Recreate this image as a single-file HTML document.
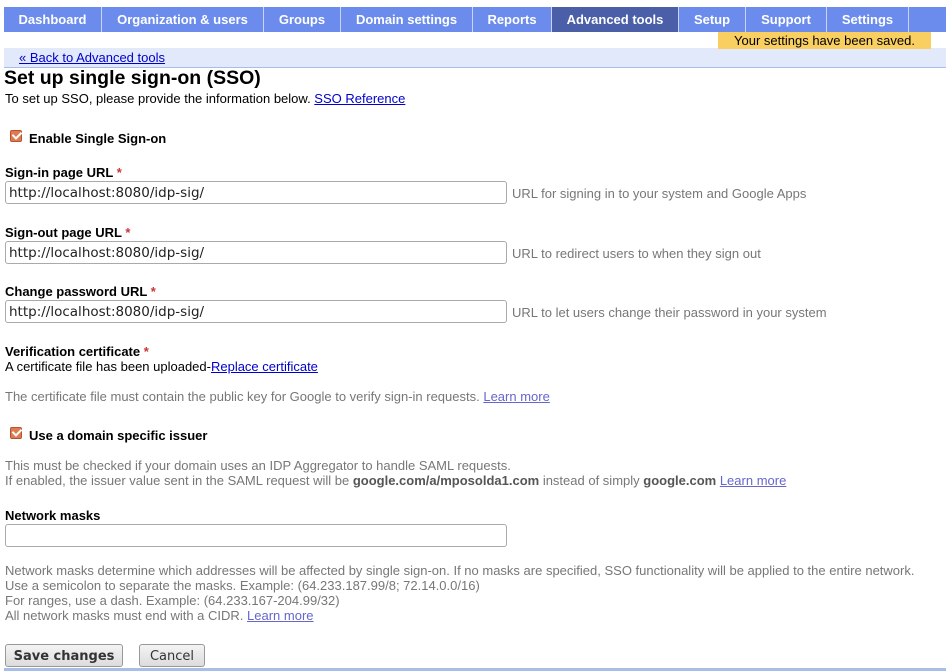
<!DOCTYPE html>
<html><head><meta charset="utf-8"><style>
body{margin:0;width:946px;height:671px;overflow:hidden;background:#fff;font-family:"Liberation Sans",Arial,sans-serif;font-size:13px;color:#000;position:relative}
.a{position:absolute;white-space:nowrap}
.tab{position:absolute;top:7px;height:25px;background:#6b8ced;color:#fff;font-weight:bold;font-size:13px;line-height:25px;text-align:center;border-right:1px solid #c9d5f7;box-sizing:border-box}
a{color:#00c;text-decoration:underline}
.lbl{font-weight:bold}
.req{color:#c33}
.inp{position:absolute;left:5px;width:502px;height:23px;border:1px solid #aaa;border-radius:3px;box-sizing:border-box;font-family:"DejaVu Sans",sans-serif;font-size:13.5px;line-height:23px;padding-left:3px;color:#222}
.hint{color:#777}
.cb{position:absolute;width:12px;height:12px;background:#e07a50;border:1px solid #b5532d;border-radius:2px;box-sizing:border-box}
.cb:after{content:"";position:absolute;left:3px;top:-1px;width:4px;height:7px;border:solid #fff;border-width:0 2px 2px 0;transform:rotate(45deg)}
.btn{position:absolute;top:644px;height:23px;border:1px solid #999;border-radius:3px;background:linear-gradient(#f4f4f4,#dcdcdc);box-sizing:border-box;font-family:"DejaVu Sans",sans-serif;font-size:13px;line-height:23px;text-align:center;color:#333}
</style></head><body>
<div class="tab" style="left:4px;width:98px">Dashboard</div>
<div class="tab" style="left:102px;width:162px">Organization &amp; users</div>
<div class="tab" style="left:264px;width:77px">Groups</div>
<div class="tab" style="left:341px;width:132px">Domain settings</div>
<div class="tab" style="left:473px;width:79px">Reports</div>
<div class="tab" style="left:552px;width:127px;background:#4a5fa8">Advanced tools</div>
<div class="tab" style="left:679px;width:67px">Setup</div>
<div class="tab" style="left:746px;width:81px">Support</div>
<div class="tab" style="left:827px;width:82px">Settings</div>
<div class="tab" style="left:909px;width:37px;border:0"></div>
<div class="a" style="left:4px;top:48px;width:942px;height:19px;background:#e2e9fb;border-bottom:1px solid #a9bde8"></div>
<div class="a" style="left:718px;top:32px;width:213px;height:17px;background:#f8cf60;text-align:center;line-height:17px;font-size:13px">Your settings have been saved.</div>
<div class="a" style="left:19px;top:50px"><a>« Back to Advanced tools</a></div>
<div class="a" style="left:4px;top:67px;font-size:19.5px;font-weight:bold">Set up single sign-on (SSO)</div>
<div class="a" style="left:5px;top:91px">To set up SSO, please provide the information below. <a>SSO Reference</a></div>
<div class="cb" style="left:10px;top:130px"></div>
<div class="a lbl" style="left:29px;top:131px">Enable Single Sign-on</div>
<div class="a lbl" style="left:5px;top:165px">Sign-in page URL <span class="req">*</span></div>
<div class="inp" style="top:181px">http://localhost:8080/idp-sig/</div>
<div class="a hint" style="left:512px;top:186px">URL for signing in to your system and Google Apps</div>
<div class="a lbl" style="left:5px;top:225px">Sign-out page URL <span class="req">*</span></div>
<div class="inp" style="top:241px">http://localhost:8080/idp-sig/</div>
<div class="a hint" style="left:512px;top:246px">URL to redirect users to when they sign out</div>
<div class="a lbl" style="left:5px;top:284px">Change password URL <span class="req">*</span></div>
<div class="inp" style="top:300px">http://localhost:8080/idp-sig/</div>
<div class="a hint" style="left:512px;top:305px">URL to let users change their password in your system</div>
<div class="a lbl" style="left:5px;top:344px">Verification certificate <span class="req">*</span></div>
<div class="a" style="left:5px;top:359px">A certificate file has been uploaded-<a>Replace certificate</a></div>
<div class="a hint" style="left:5px;top:389px">The certificate file must contain the public key for Google to verify sign-in requests. <a style="color:#66c">Learn more</a></div>
<div class="cb" style="left:10px;top:427px"></div>
<div class="a lbl" style="left:29px;top:428px">Use a domain specific issuer</div>
<div class="a hint" style="left:5px;top:458px">This must be checked if your domain uses an IDP Aggregator to handle SAML requests.</div>
<div class="a hint" style="left:5px;top:473px">If enabled, the issuer value sent in the SAML request will be <b style="color:#555">google.com/a/mposolda1.com</b> instead of simply <b style="color:#555">google.com</b> <a style="color:#66c">Learn more</a></div>
<div class="a lbl" style="left:5px;top:508px">Network masks</div>
<div class="inp" style="top:524px"></div>
<div class="a hint" style="left:5px;top:563px">Network masks determine which addresses will be affected by single sign-on. If no masks are specified, SSO functionality will be applied to the entire network.</div>
<div class="a hint" style="left:5px;top:578px">Use a semicolon to separate the masks. Example: (64.233.187.99/8; 72.14.0.0/16)</div>
<div class="a hint" style="left:5px;top:593px">For ranges, use a dash. Example: (64.233.167-204.99/32)</div>
<div class="a hint" style="left:5px;top:608px">All network masks must end with a CIDR. <a style="color:#66c">Learn more</a></div>
<div class="btn" style="left:5px;width:118px;font-weight:bold">Save changes</div>
<div class="btn" style="left:139px;width:66px">Cancel</div>
<div class="a" style="left:4px;top:668px;width:942px;height:3px;background:#a9bde8"></div>
</body></html>
